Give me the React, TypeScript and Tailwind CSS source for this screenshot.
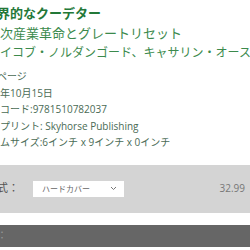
export default function App() {
  const details = [
    'ページ',
    '年10月15日',
    'コード:9781510782037',
    'プリント: Skyhorse Publishing',
    'ムサイズ:6インチ x 9インチ x 0インチ',
  ];

  return (
    <div
      className="w-[250px] h-[250px] overflow-hidden bg-white"
      style={{ fontFamily: '"Open Sans", "Noto Sans CJK JP", sans-serif' }}
    >
      <div className="pt-[3px] whitespace-nowrap">
        <h1 className="-ml-[3px] text-[13px] leading-[20px] font-bold text-[#237838]">
          界的なクーデター
        </h1>
        <p className="text-[13px] leading-[20px] text-[#3b8a4c]">次産業革命とグレートリセット</p>
        <p className="text-[12px] leading-[20px] text-[#3b8a4c]">
          イコブ・ノルダンゴード、キャサリン・オースティン・フィッツ
        </p>

        <div className="mt-[5px] flex flex-col text-[10px] leading-[16.5px] text-[#4a6b55]">
          {details.map((d) => (
            <span key={d} className={d === 'ページ' ? '-ml-[3px]' : ''}>
              {d}
            </span>
          ))}
        </div>
      </div>

      <div className="mt-[14px] h-[48px] bg-[#d4d4d4] flex items-center">
        <span className="-ml-[3px] text-[11px] text-[#555]">式：</span>
        <div className="ml-[14px] w-[91px] h-[16px] bg-white flex items-center justify-between pl-[9px] pr-[7px]">
          <span className="text-[8px] text-[#666]">ハードカバー</span>
          <svg width="7" height="5" viewBox="0 0 7 5" className="text-[#777]">
            <path d="M1 1l2.5 2.5L6 1" fill="none" stroke="currentColor" strokeWidth="1" />
          </svg>
        </div>
        <span className="ml-auto mr-[5px] text-[10px] text-[#777]">32.99</span>
      </div>

      <div className="mt-[12px] h-[22px] bg-[#666] flex items-center">
        <span className="-ml-[3px] text-[10px] text-[#999]">：</span>
      </div>
    </div>
  );
}
